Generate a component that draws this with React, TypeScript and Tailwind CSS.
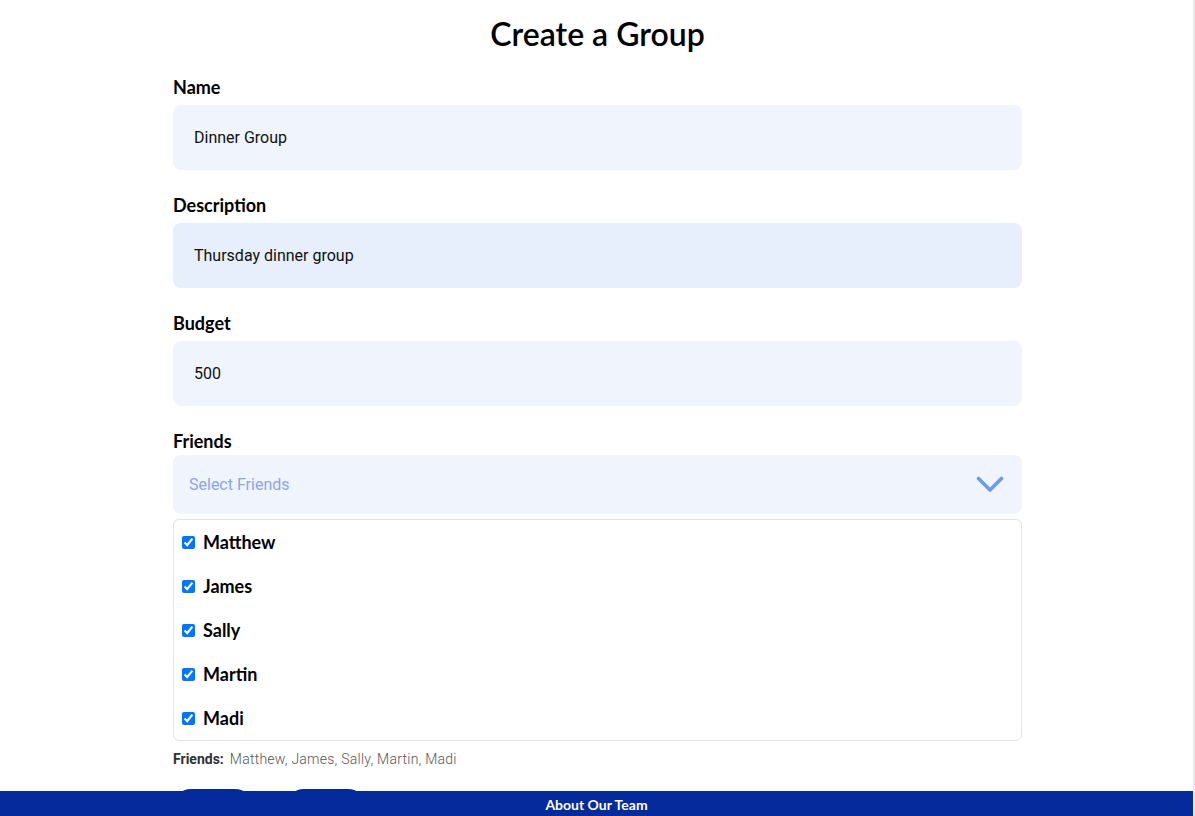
import React from 'react';

const heading = { fontFamily: 'Lato, "Noto Sans", sans-serif' };
const body = { fontFamily: 'Roboto, "Liberation Sans", sans-serif' };

const friends = ['Matthew', 'James', 'Sally', 'Martin', 'Madi'];

const Field = ({ label, value, bg }: { label: string; value: string; bg: string }) => (
  <div className="flex flex-col">
    <label className="text-[18px] leading-6 font-bold text-black mb-[6px]" style={heading}>
      {label}
    </label>
    <div className={`h-[65px] rounded-lg flex items-center px-[21px] text-[16px] text-[#111] ${bg}`} style={body}>
      {value}
    </div>
  </div>
);

export default function App() {
  return (
    <div className="min-h-screen bg-white">
      <div className="w-[849px] mx-auto pt-[14px] pb-[60px]">
        <h1 className="text-[32px] leading-10 font-semibold text-black text-center mb-[21px]" style={heading}>
          Create a Group
        </h1>

        <div className="flex flex-col gap-[23px]">
          <Field label="Name" value="Dinner Group" bg="bg-[#eff4fd]" />
          <Field label="Description" value="Thursday dinner group" bg="bg-[#e7eefc]" />
          <Field label="Budget" value="500" bg="bg-[#eff4fd]" />

          <div className="flex flex-col">
            <label className="text-[18px] leading-6 font-bold text-black mb-[2px]" style={heading}>
              Friends
            </label>
            <div className="h-[59px] rounded-lg bg-[#eff4fd] flex items-center justify-between pl-4 pr-[18px]">
              <span className="text-[16px] text-[#8ca5e9]" style={body}>Select Friends</span>
              <svg width="28" height="17" viewBox="0 0 28 17" fill="none">
                <path d="M2.5 2.5 L14 14 L25.5 2.5" stroke="#6c9ce6" strokeWidth="3.6" strokeLinecap="round" strokeLinejoin="round" />
              </svg>
            </div>
            <div className="mt-[5px] border border-[#e3e3e3] rounded-md">
              {friends.map((f) => (
                <label key={f} className="h-[44px] flex items-center pl-2">
                  <input type="checkbox" checked readOnly className="w-[13px] h-[13px] m-0 accent-[#0075ff]" />
                  <span className="ml-[8px] text-[18px] font-bold text-black" style={heading}>{f}</span>
                </label>
              ))}
            </div>
            <div className="mt-2 text-[14px] leading-5 flex gap-[6px]" style={body}>
              <span className="font-bold text-[#333]">Friends:</span>
              <span className="font-light text-[#555] tracking-[0.25px]">{friends.join(', ')}</span>
            </div>
            <div className="mt-[20px] flex gap-[33px]">
              <button className="w-[80px] h-[44px] rounded-[18px] bg-[#05299c] text-white text-sm" style={heading}>Create</button>
              <button className="w-[80px] h-[44px] rounded-[18px] bg-[#05299c] text-white text-sm" style={heading}>Cancel</button>
            </div>
          </div>
        </div>
      </div>

      <div className="fixed bottom-0 left-0 right-[2px] h-[25px] bg-[#052a9c] flex items-center justify-center pt-[1px]">
        <span className="text-white text-[14px] font-bold" style={heading}>About Our Team</span>
      </div>
      <div className="fixed top-0 right-0 bottom-0 w-[2px] bg-[#ececec]" />
    </div>
  );
}
